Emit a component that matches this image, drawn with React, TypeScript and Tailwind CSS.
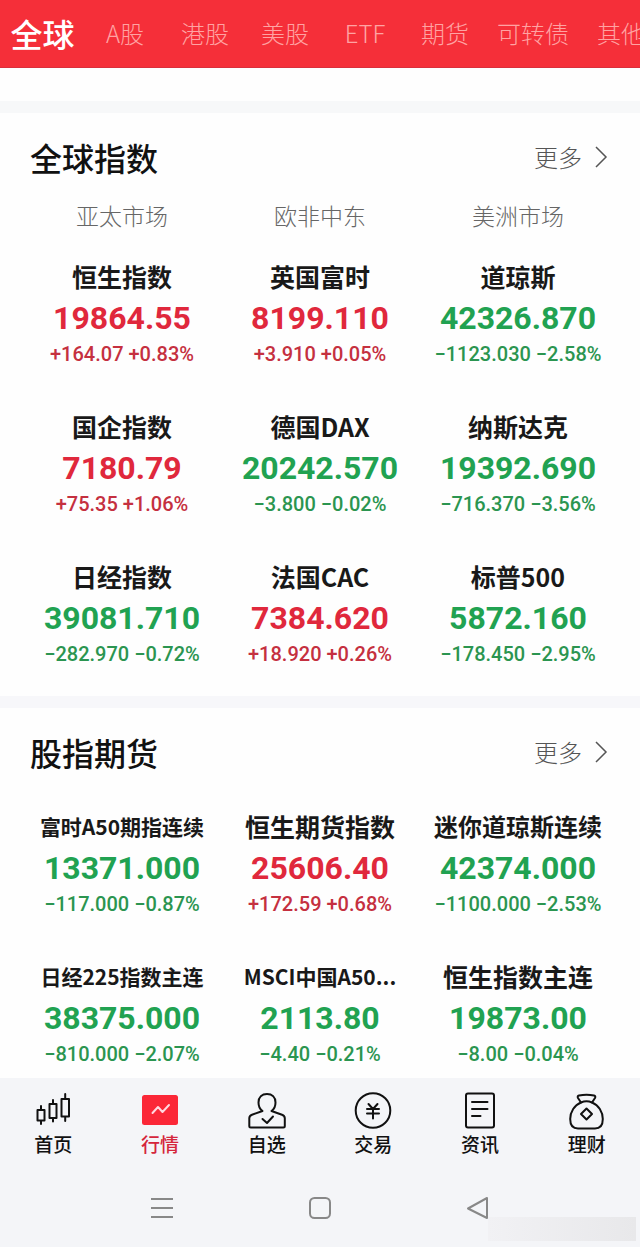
import { useState } from "react";
import type { ReactNode } from "react";
import clsx from "clsx";

type Quote = {
  name: string;
  price: string;
  change: string;
  percent: string;
  size?: "sm" | "md";
};

const tabs = ["全球", "A股", "港股", "美股", "ETF", "期货", "可转债", "其他"];

const markets = ["亚太市场", "欧非中东", "美洲市场"];

const globalIndexes: Quote[] = [
  { name: "恒生指数", price: "19864.55", change: "+164.07", percent: "+0.83%" },
  { name: "英国富时", price: "8199.110", change: "+3.910", percent: "+0.05%" },
  { name: "道琼斯", price: "42326.870", change: "−1123.030", percent: "−2.58%" },
  { name: "国企指数", price: "7180.79", change: "+75.35", percent: "+1.06%" },
  { name: "德国DAX", price: "20242.570", change: "−3.800", percent: "−0.02%" },
  { name: "纳斯达克", price: "19392.690", change: "−716.370", percent: "−3.56%" },
  { name: "日经指数", price: "39081.710", change: "−282.970", percent: "−0.72%" },
  { name: "法国CAC", price: "7384.620", change: "+18.920", percent: "+0.26%" },
  { name: "标普500", price: "5872.160", change: "−178.450", percent: "−2.95%" },
];

const futures: Quote[] = [
  { name: "富时A50期指连续", price: "13371.000", change: "−117.000", percent: "−0.87%", size: "sm" },
  { name: "恒生期货指数", price: "25606.40", change: "+172.59", percent: "+0.68%" },
  { name: "迷你道琼斯连续", price: "42374.000", change: "−1100.000", percent: "−2.53%", size: "md" },
  { name: "日经225指数主连", price: "38375.000", change: "−810.000", percent: "−2.07%", size: "sm" },
  { name: "MSCI中国A50...", price: "2113.80", change: "−4.40", percent: "−0.21%", size: "sm" },
  { name: "恒生指数主连", price: "19873.00", change: "−8.00", percent: "−0.04%" },
];

const Icon = ({ children }: { children: ReactNode }) => (
  <svg
    viewBox="0 0 38 38"
    className="size-[38px]"
    fill="none"
    stroke="currentColor"
    strokeWidth="2"
    strokeLinecap="round"
    strokeLinejoin="round"
    aria-hidden="true"
  >
    {children}
  </svg>
);

const navItems = [
  {
    label: "首页",
    icon: (
      <Icon>
        <path d="M3.500 18h7v10.500h-7zM7 14v4M7 28.500V32" />
        <path d="M15.500 12h7v14h-7zM19 8v4M19 26v3.500" />
        <path d="M27.500 7h7.500v17.500h-7.500zM31.200 2v5M31.200 24.500V29" />
      </Icon>
    ),
  },
  {
    label: "行情",
    icon: (
      <Icon>
        <rect x="1" y="3" width="36" height="30" rx="2.500" fill="#fb2737" stroke="none" />
        <path d="m11.500 21 5.500-6 4.500 5 6.500-7" stroke="#ffd9e0" />
      </Icon>
    ),
  },
  {
    label: "自选",
    icon: (
      <Icon>
        <path d="M14.500 19c-3-2-4-5-4-8.500 0-5.500 3.500-8.500 8.500-8.500s8.500 3 8.500 8.500c0 3.500-1 6.500-4 8.500l10.500 3.700c1.700.6 2.800 1.800 2.800 3.600V34q0 1.500-1.500 1.500h-32.500q-1.500 0-1.500-1.500v-7.700c0-1.800 1-3 2.700-3.600z" />
        <path d="m14.500 27 4.500 4 6-6.500" />
      </Icon>
    ),
  },
  {
    label: "交易",
    icon: (
      <Icon>
        <circle cx="19" cy="18.500" r="17.300" />
        <path d="m14.500 12 4.500 5 4.500-5M13 17h12M13 21.500h12M19 17v9.500" />
      </Icon>
    ),
  },
  {
    label: "资讯",
    icon: (
      <Icon>
        <rect x="5" y="1.500" width="28" height="34" rx="2" />
        <path d="M11 10h15.500M11 17h15.500M11 24h8.500" />
      </Icon>
    ),
  },
  {
    label: "理财",
    icon: (
      <Icon>
        <path d="M13 10.500 10 6q-1-2 1-2.500Q18.500 2 26 3.500q2 .5 1 2.500l-3 4.500" />
        <path d="M13 10.500q5.500-2.500 11 0C30.500 13 34.800 20 34.800 27c0 6.500-3 9.500-7.800 9.500H10c-4.800 0-7.800-3-7.800-9.500 0-7 4.300-14 10.800-16.500z" />
        <path d="m18.500 16.500 5.500 5.500-5.500 5.500L13 22z" />
      </Icon>
    ),
  },
];

const QuoteCell = ({ quote }: { quote: Quote }) => {
  const up = quote.change.startsWith("+");
  return (
    <a href="#quote" className="flex flex-col items-center whitespace-nowrap">
      <span
        className={clsx(
          "h-[34px] leading-[32px] font-bold text-[#191919]",
          quote.size === "sm" && "text-[21px]",
          quote.size === "md" && "text-[24px]",
          !quote.size && "text-[25px]",
        )}
      >
        {quote.name}
      </span>
      <span
        className={clsx(
          "font-[Roboto] text-[32px] leading-[48px] font-bold",
          up ? "text-[#e0283c]" : "text-[#21a251]",
        )}
      >
        {quote.price}
      </span>
      <span
        className={clsx(
          "font-[Roboto] text-[20px] leading-6 font-medium",
          up ? "text-[#c5303f]" : "text-[#2b9550]",
        )}
      >
        {quote.change} {quote.percent}
      </span>
    </a>
  );
};

const SectionHeader = ({ title }: { title: string }) => (
  <div className="flex h-12 items-center justify-between pr-8 pl-[30px]">
    <h2 className="text-[32px] leading-[48px] font-medium text-[#111]">{title}</h2>
    <a href="#more" className="flex items-center gap-3 text-[24px] leading-[48px] font-light text-[#555]">
      更多
      <svg viewBox="0 0 14 24" className="h-6 w-3.5" fill="none" stroke="currentColor" strokeWidth="1.500" aria-hidden="true">
        <path d="m2 2 10 10L2 22" />
      </svg>
    </a>
  </div>
);

const App = () => {
  const [tab, setTab] = useState("全球");
  const [page, setPage] = useState("行情");

  return (
    <div className="w-full overflow-hidden bg-[#fefefe] font-['Noto_Sans_CJK_SC',sans-serif]">
      <header className="flex h-[68px] items-center overflow-hidden border-b border-[#d92f3c] bg-[#f52f39]">
        {tabs.map((t) => (
          <button
            key={t}
            type="button"
            onClick={() => setTab(t)}
            className={clsx(
              "h-[66px] shrink-0 self-start text-center whitespace-nowrap",
              t === tab ? "w-[85px] text-[32px] font-medium text-white" : "text-[24px] font-light text-[#ffa3a3]",
              t !== tab && (t.length > 2 && t !== "ETF" ? "w-24" : "w-20"),
            )}
          >
            {t}
          </button>
        ))}
      </header>

      <main>
        <div className="mt-[33px] h-3 bg-[#f7f8f9]" />
        <section className="pt-5 pb-[30px]">
          <SectionHeader title="全球指数" />
          <div className="mt-[17px] grid grid-cols-3 px-[23px] text-center text-[23px] leading-[34px] font-light text-[#666]">
            {markets.map((m) => (
              <span key={m}>{m}</span>
            ))}
          </div>
          <div className="mt-7 grid grid-cols-3 gap-y-11 px-[23px]">
            {globalIndexes.map((q) => (
              <QuoteCell key={q.name} quote={q} />
            ))}
          </div>
        </section>

        <div className="h-3 bg-[#f7f7fa]" />
        <section className="pt-5 pb-3">
          <SectionHeader title="股指期货" />
          <div className="mt-[34px] grid grid-cols-3 gap-y-11 px-[23px]">
            {futures.map((q) => (
              <QuoteCell key={q.name} quote={q} />
            ))}
          </div>
        </section>
      </main>

      <footer className="relative bg-[#f4f5f8]">
        <nav className="grid grid-cols-6 pt-3.5">
          {navItems.map((item) => (
            <button
              key={item.label}
              type="button"
              onClick={() => setPage(item.label)}
              className={clsx(
                "flex flex-col items-center text-[19px] leading-7 font-medium",
                item.label === page ? "text-[#d5263c]" : "text-[#111]",
              )}
            >
              {item.icon}
              {item.label}
            </button>
          ))}
        </nav>

        {/* Android system bar */}
        <div className="grid h-[89px] grid-cols-3 place-items-center px-[83px] pt-2.5 text-[#888]">
          <button type="button" aria-label="菜单">
            <svg viewBox="0 0 24 24" className="size-6" fill="none" stroke="currentColor" strokeWidth="2">
              <path d="M1 3h22M1 12h22M1 21h22" />
            </svg>
          </button>
          <button type="button" aria-label="主屏幕">
            <svg viewBox="0 0 24 24" className="size-6" fill="none" stroke="currentColor" strokeWidth="2">
              <rect x="2" y="2" width="20" height="20" rx="4.500" />
            </svg>
          </button>
          <button type="button" aria-label="返回">
            <svg viewBox="0 0 24 24" className="size-6" fill="none" stroke="currentColor" strokeWidth="2" strokeLinejoin="round">
              <path d="M21 2v20L2 12.500z" />
            </svg>
          </button>
        </div>
        <div className="absolute right-1 bottom-1.5 h-6 w-[148px] bg-gradient-to-r from-[#f1f1f4] to-[#e8e8ea]" />
      </footer>
    </div>
  );
};

export default App;
